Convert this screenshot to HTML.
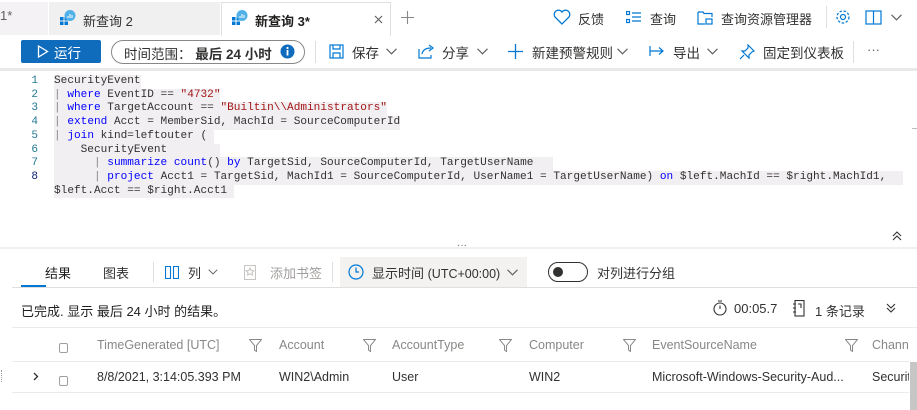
<!DOCTYPE html>
<html><head><meta charset="utf-8">
<style>
*{margin:0;padding:0;box-sizing:border-box}
body{width:917px;height:410px;overflow:hidden;background:#fff;font-family:"Liberation Sans","Noto Sans CJK SC",sans-serif;font-size:13px;color:#323130;position:relative}
.a{position:absolute;white-space:nowrap}
.code{font-family:"Liberation Mono",monospace;font-size:11.1px;line-height:13.7px}
.code .a{white-space:pre}
.ln{color:#237893;width:12px;text-align:right;left:26px}
.hl{background:#f2eff2}
.k{color:#0000ff}.s{color:#a31515}.f{color:#0000ff}
.th{color:#8a8886;font-size:12.5px;top:338px}
.td{color:#323130;font-size:12.5px;top:370px}
.flt{top:339px}
</style></head><body>
<svg width="0" height="0" style="position:absolute"><defs>
<symbol id="chev" viewBox="0 0 11 7"><path d="M0.5 0.8L5.5 5.8 10.5 0.8" fill="none" stroke="#605e5c" stroke-width="1.1"/></symbol>
<symbol id="flt" viewBox="0 0 13 13"><path d="M0.5 0.5h12L7.5 6.5v6l-2-1.5V6.5z" fill="none" stroke="#8a8886" stroke-width="1"/></symbol>
</defs></svg>
<!-- tab bar -->
<div class="a" style="left:0;top:2px;width:48px;height:33px;background:#f4f2f4"></div>
<div class="a" style="left:49px;top:2px;width:171px;height:33px;background:#f0f0f0"></div>
<div class="a" style="left:221px;top:2px;width:170px;height:34px;background:#fff;border:1px solid #e1dfdd;border-bottom:none"></div>
<div class="a" style="left:0;top:8px;color:#605e5c">1*</div>
<svg class="a" style="left:60px;top:10px" width="16" height="15"><rect x="0" y="7" width="3.5" height="3.5" fill="#0078d4"/><rect x="4.5" y="7" width="3.5" height="3.5" fill="#0078d4"/><rect x="0" y="11.5" width="3.5" height="3.5" fill="#0078d4"/><rect x="4.5" y="11.5" width="3.5" height="3.5" fill="#0078d4"/><circle cx="10" cy="5.5" r="5.5" fill="#50b0e8"/><path d="M8 8V6M10 8V4M12 8V5" stroke="#fff" stroke-width="1"/></svg>
<div class="a" style="left:83px;top:11px;color:#323130">新查询 2</div>
<svg class="a" style="left:232px;top:10px" width="16" height="15"><rect x="0" y="7" width="3.5" height="3.5" fill="#0078d4"/><rect x="4.5" y="7" width="3.5" height="3.5" fill="#0078d4"/><rect x="0" y="11.5" width="3.5" height="3.5" fill="#0078d4"/><rect x="4.5" y="11.5" width="3.5" height="3.5" fill="#0078d4"/><circle cx="10" cy="5.5" r="5.5" fill="#50b0e8"/><path d="M8 8V6M10 8V4M12 8V5" stroke="#fff" stroke-width="1"/></svg>
<div class="a" style="left:255px;top:11px;font-weight:bold;color:#201f1e">新查询 3*</div>
<svg class="a" style="left:374px;top:15px" width="9" height="9"><path d="M1 1l7 7M8 1l-7 7" stroke="#605e5c" stroke-width="1.1"/></svg>
<svg class="a" style="left:401px;top:11px" width="13" height="13"><path d="M6.5 0v13M0 6.5h13" stroke="#8a8886" stroke-width="1.1"/></svg>
<svg class="a" style="left:553px;top:9px" width="18" height="16"><path d="M9 15 L2 8 A4 4 0 0 1 9 3 A4 4 0 0 1 16 8 Z" fill="none" stroke="#0078d4" stroke-width="1.3"/></svg>
<div class="a" style="left:578px;top:9px">反馈</div>
<svg class="a" style="left:626px;top:11px" width="16" height="13"><g fill="none" stroke="#0078d4" stroke-width="1.2"><rect x="0.5" y="0.5" width="3" height="3"/><rect x="0.5" y="8.5" width="3" height="3"/><path d="M6 2h9M6 6h9M6 10h9"/></g></svg>
<div class="a" style="left:650px;top:9px">查询</div>
<svg class="a" style="left:697px;top:10px" width="18" height="16"><g fill="none" stroke="#0078d4" stroke-width="1.2"><path d="M1 2h5l1 1.5h8V7M1 2v12h7"/><rect x="9" y="9" width="6" height="5"/></g></svg>
<div class="a" style="left:721px;top:9px">查询资源管理器</div>
<div class="a" style="left:826px;top:6px;width:1px;height:22px;background:#e1dfdd"></div>
<svg class="a" style="left:835px;top:9px" width="16" height="16"><circle cx="8" cy="8" r="2.5" fill="none" stroke="#0078d4" stroke-width="1.2"/><circle cx="8" cy="8" r="6" fill="none" stroke="#0078d4" stroke-width="1.2" stroke-dasharray="2.5 1.6"/></svg>
<svg class="a" style="left:865px;top:10px" width="18" height="15"><g fill="none" stroke="#0078d4" stroke-width="1.2"><rect x="1" y="1" width="15" height="13"/><path d="M8.5 1v13"/></g></svg>
<svg class="a" style="left:891px;top:14px" width="11" height="7"><use href="#chev"/></svg>
<!-- toolbar -->
<div class="a" style="left:21px;top:40px;width:80px;height:23px;background:#0f6cbd;border-radius:2px"></div>
<svg class="a" style="left:37px;top:45px" width="12" height="13"><path d="M1.5 1 L10.5 6.5 L1.5 12 Z" fill="none" stroke="#fff" stroke-width="1.3"/></svg>
<div class="a" style="left:54px;top:42px;color:#fff;font-size:13.5px">运行</div>
<div class="a" style="left:111px;top:40px;width:194px;height:24px;border:1px solid #8a8886;border-radius:12px"></div>
<div class="a" style="left:124px;top:43px;font-size:13.5px">时间范围： <b>最后 24 小时</b></div>
<svg class="a" style="left:280px;top:44px" width="15" height="15"><circle cx="7.5" cy="7.5" r="7" fill="#0f6cbd"/><rect x="6.6" y="6" width="1.8" height="5.5" fill="#fff"/><circle cx="7.5" cy="4" r="1.1" fill="#fff"/></svg>
<div class="a" style="left:315px;top:41px;width:1px;height:22px;background:#e1dfdd"></div>
<svg class="a" style="left:329px;top:44px" width="15" height="15"><g fill="none" stroke="#0078d4" stroke-width="1.2"><rect x="1" y="1" width="13" height="13"/><path d="M4 1v4h7V1M4 14V9h7v5"/></g></svg>
<div class="a" style="left:352px;top:42px;font-size:13.5px">保存</div>
<svg class="a" style="left:386px;top:48px" width="11" height="7"><use href="#chev"/></svg>
<svg class="a" style="left:418px;top:43px" width="17" height="16"><g fill="none" stroke="#0078d4" stroke-width="1.2"><path d="M1 6v9h12v-3"/><path d="M4 11c1-5 5-6 9-6M11 2l4 3-4 3"/></g></svg>
<div class="a" style="left:442px;top:42px;font-size:13.5px">分享</div>
<svg class="a" style="left:477px;top:48px" width="11" height="7"><use href="#chev"/></svg>
<svg class="a" style="left:508px;top:44px" width="15" height="15"><path d="M7.5 0v15M0 7.5h15" stroke="#0078d4" stroke-width="1.3"/></svg>
<div class="a" style="left:532px;top:42px;font-size:13.5px">新建预警规则</div>
<svg class="a" style="left:617px;top:48px" width="11" height="7"><use href="#chev"/></svg>
<svg class="a" style="left:649px;top:45px" width="16" height="12"><path d="M1 1v10M1 6h13M10 2.5l4 3.5-4 3.5" fill="none" stroke="#0078d4" stroke-width="1.2"/></svg>
<div class="a" style="left:673px;top:42px;font-size:13.5px">导出</div>
<svg class="a" style="left:707px;top:48px" width="11" height="7"><use href="#chev"/></svg>
<svg class="a" style="left:739px;top:44px" width="16" height="16"><g fill="none" stroke="#0078d4" stroke-width="1.2"><path d="M9 1l6 6-2 1-3 3 0 3-7-7 3 0 3-3z"/><path d="M5 11l-4 4"/></g></svg>
<div class="a" style="left:763px;top:42px;font-size:13.5px">固定到仪表板</div>
<div class="a" style="left:853px;top:41px;width:1px;height:22px;background:#e1dfdd"></div>
<div class="a" style="left:867px;top:42px;color:#605e5c">···</div>
<div class="a" style="left:0;top:68px;width:917px;height:3px;background:#e8e8e8"></div>
<!-- editor -->
<div class="a code" style="left:0;top:75px;width:917px">
<div class="a ln" style="top:0">1</div><div class="a ln" style="top:13.7px">2</div><div class="a ln" style="top:27.4px">3</div><div class="a ln" style="top:41.1px">4</div><div class="a ln" style="top:54.8px">5</div><div class="a ln" style="top:68.5px">6</div><div class="a ln" style="top:82.2px">7</div><div class="a ln" style="top:95.9px;color:#0b216f">8</div>
<div class="a hl" style="left:54px;top:0">SecurityEvent</div>
<div class="a hl" style="left:54px;top:13.7px"><span style="color:#888">|</span> <span class="k">where</span> EventID == <span class="s">"4732"</span></div>
<div class="a hl" style="left:54px;top:27.4px"><span style="color:#888">|</span> <span class="k">where</span> TargetAccount == <span class="s">"Builtin\\Administrators"</span></div>
<div class="a hl" style="left:54px;top:41.1px"><span style="color:#888">|</span> <span class="k">extend</span> Acct = MemberSid, MachId = SourceComputerId</div>
<div class="a hl" style="left:54px;top:54.8px"><span style="color:#888">|</span> <span class="k">join</span> kind=leftouter ( </div>
<div class="a hl" style="left:54px;top:68.5px">    SecurityEvent        </div>
<div class="a hl" style="left:54px;top:82.2px">      <span style="color:#888">|</span> <span class="k">summarize</span> <span class="f">count</span>() <span class="k">by</span> TargetSid, SourceComputerId, TargetUserName   </div>
<div class="a hl" style="left:54px;top:95.9px;width:849px">      <span style="color:#888">|</span> <span class="k">project</span> Acct1 = TargetSid, MachId1 = SourceComputerId, UserName1 = TargetUserName) <span class="k">on</span> $left.MachId == $right.MachId1,</div>
<div class="a hl" style="left:54px;top:109.6px">$left.Acct == $right.Acct1 </div>
</div>
<div class="a" style="left:912px;top:128px;width:5px;height:1px;background:#bbb"></div>
<div class="a" style="left:904px;top:40px;width:1px;height:0"></div>
<svg class="a" style="left:892px;top:231px" width="10" height="10"><path d="M1 5l4-4 4 4M1 9l4-4 4 4" fill="none" stroke="#323130" stroke-width="1.1"/></svg>
<div class="a" style="left:0;top:247px;width:917px;height:2px;background:#f0f0f0"></div>
<div class="a" style="left:457px;top:240px;color:#605e5c;font-size:10px">···</div>
<!-- results tabs -->
<div class="a" style="left:45px;top:263px;color:#201f1e">结果</div>
<div class="a" style="left:21px;top:285px;width:25px;height:2px;background:#0078d4"></div>
<div class="a" style="left:103px;top:263px">图表</div>
<div class="a" style="left:153px;top:262px;width:1px;height:20px;background:#e1dfdd"></div>
<svg class="a" style="left:165px;top:266px" width="14" height="13"><g fill="none" stroke="#0078d4" stroke-width="1.1"><rect x="0.5" y="0.5" width="5" height="12"/><rect x="8.5" y="0.5" width="5" height="12"/></g></svg>
<div class="a" style="left:188px;top:263px">列</div>
<svg class="a" style="left:208px;top:269px" width="10" height="6"><use href="#chev"/></svg>
<svg class="a" style="left:244px;top:265px" width="12" height="15"><g fill="none" stroke="#c8c6c4" stroke-width="1.1"><rect x="0.5" y="0.5" width="11" height="14"/><path d="M6 3l1.3 2.5 2.5.3-1.8 1.8.5 2.5L6 8.8 3.5 10.1 4 7.6 2.2 5.8l2.5-.3z"/></g></svg>
<div class="a" style="left:270px;top:263px;color:#a19f9d">添加书签</div>
<div class="a" style="left:332px;top:262px;width:1px;height:20px;background:#e1dfdd"></div>
<div class="a" style="left:340px;top:257px;width:187px;height:30px;background:#f3f2f1"></div>
<svg class="a" style="left:348px;top:264px" width="16" height="16"><circle cx="8" cy="8" r="7" fill="none" stroke="#0078d4" stroke-width="1.2"/><path d="M8 3.5V8h3" fill="none" stroke="#0078d4" stroke-width="1.2"/></svg>
<div class="a" style="left:372px;top:263px">显示时间 <span style="font-size:12.5px">(UTC+00:00)</span></div>
<svg class="a" style="left:507px;top:269px" width="11" height="7"><use href="#chev"/></svg>
<div class="a" style="left:548px;top:262px;width:40px;height:20px;border:1px solid #323130;border-radius:10px"></div>
<div class="a" style="left:553px;top:267px;width:10px;height:10px;border-radius:5px;background:#323130"></div>
<div class="a" style="left:597px;top:263px">对列进行分组</div>
<div class="a" style="left:12px;top:287px;width:905px;height:1px;background:#e1dfdd"></div>
<!-- status -->
<div class="a" style="left:21px;top:301px;color:#201f1e;font-size:13px">已完成. 显示 最后 24 小时 的结果。</div>
<svg class="a" style="left:713px;top:300px" width="14" height="16"><g fill="none" stroke="#323130" stroke-width="1.1"><circle cx="7" cy="9" r="6"/><path d="M5 1h4M7 9V5.5"/></g></svg>
<div class="a" style="left:734px;top:301px">00:05.7</div>
<svg class="a" style="left:793px;top:300px" width="12" height="17"><g fill="none" stroke="#323130" stroke-width="1.1"><rect x="2" y="0.5" width="9" height="15.5"/><path d="M0 4h3M0 8h3M0 12h3M5 4h3v4"/></g></svg>
<div class="a" style="left:815px;top:301px">1 条记录</div>
<svg class="a" style="left:886px;top:303px" width="10" height="10"><path d="M1 1l4 4 4-4M1 5l4 4 4-4" fill="none" stroke="#323130" stroke-width="1.1"/></svg>
<div class="a" style="left:12px;top:327px;width:905px;height:1px;background:#edebe9"></div>
<!-- header -->
<div class="a" style="left:59px;top:343px;width:9px;height:10px;border:1px solid #a19f9d;border-radius:2px"></div>
<div class="a th" style="left:97px">TimeGenerated [UTC]</div>
<svg class="a flt" style="left:249px" width="13" height="13"><use href="#flt"/></svg>
<div class="a th" style="left:279px">Account</div>
<svg class="a flt" style="left:363px" width="13" height="13"><use href="#flt"/></svg>
<div class="a th" style="left:392px">AccountType</div>
<svg class="a flt" style="left:499px" width="13" height="13"><use href="#flt"/></svg>
<div class="a th" style="left:529px">Computer</div>
<svg class="a flt" style="left:623px" width="13" height="13"><use href="#flt"/></svg>
<div class="a th" style="left:652px">EventSourceName</div>
<svg class="a flt" style="left:845px" width="13" height="13"><use href="#flt"/></svg>
<div class="a th" style="left:872px">Channel</div>
<div class="a" style="left:12px;top:361px;width:897px;height:1px;background:#edebe9"></div>
<svg class="a" style="left:33px;top:372px" width="6" height="9"><path d="M1 1l3.5 3.5L1 8" fill="none" stroke="#323130" stroke-width="1.3"/></svg>
<div class="a" style="left:59px;top:376px;width:9px;height:10px;border:1px solid #a19f9d;border-radius:2px"></div>
<div class="a td" style="left:97px">8/8/2021, 3:14:05.393 PM</div>
<div class="a td" style="left:279px">WIN2\Admin</div>
<div class="a td" style="left:392px">User</div>
<div class="a td" style="left:529px">WIN2</div>
<div class="a td" style="left:652px">Microsoft-Windows-Security-Aud...</div>
<div class="a td" style="left:872px">Security</div>
<div class="a" style="left:12px;top:392px;width:897px;height:1px;background:#edebe9"></div>
<div class="a" style="left:909px;top:328px;width:8px;height:82px;background:#fff"></div>
<div class="a" style="left:910px;top:362px;width:7px;height:48px;background:#c8c6c4"></div>
<div class="a" style="left:1px;top:370px;width:1px;height:12px;border-left:1px dotted #999"></div>
</body></html>
